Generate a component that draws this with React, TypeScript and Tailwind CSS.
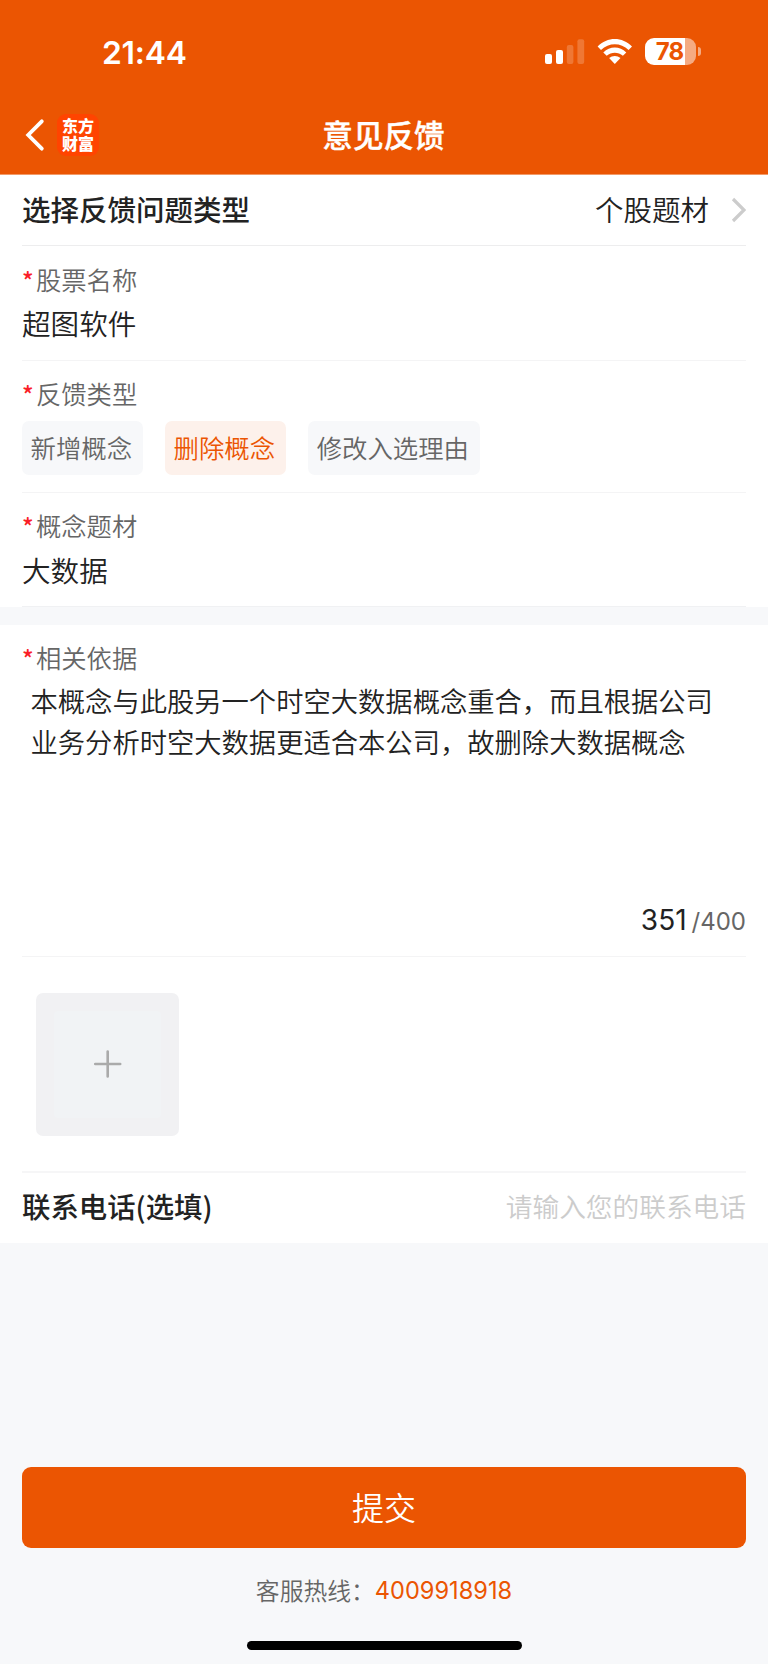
import React from "react";
import clsx from "clsx";

const FEEDBACK_TYPES = ["新增概念", "删除概念", "修改入选理由"];

const StatusBar = () => (
  <div className="flex h-[97px] items-start justify-between pl-[102px] pr-[67px] pt-[38px]">
    <span className="mt-px font-[Inter] text-[31.8px] font-semibold leading-[28px] tracking-[-0.2px]">
      21:44
    </span>
    <div className="flex items-start">
      <svg width="40" height="27" viewBox="0 0 40 27" fill="#fff">
        <rect x="0" y="16" width="7" height="10" rx="2" />
        <rect x="11" y="12" width="7" height="14" rx="2" />
        <rect x="21.8" y="7" width="6.6" height="19" rx="2" opacity="0.2" />
        <rect x="32.4" y="1.3" width="6.8" height="24.7" rx="2" opacity="0.2" />
      </svg>
      <svg className="ml-3" width="36" height="27" viewBox="0 0 36 27" fill="#fff">
        <path d="M0.6 8.6 C10.2 -1.5 25.4 -1.5 35 8.6 L31.6 12 C23.8 4.2 11.8 4.2 4 12 Z" />
        <path d="M6.3 14.4 C12.8 8 22.8 8 29.3 14.4 L25.9 17.8 C21.3 13.6 14.3 13.6 9.7 17.8 Z" />
        <path d="M12.1 20.1 C15.5 17.2 20.1 17.2 23.5 20.1 L17.8 26 Z" />
      </svg>
      <div className="ml-[12px] flex items-center">
        <div className="flex h-[27px] w-[51px] items-center justify-center overflow-hidden rounded-[9px] bg-[linear-gradient(90deg,#fff_0_40px,#f5aa82_40px)] text-[#eb5502]">
          <span className="ml-[-2px] font-[Inter] text-[24px] font-bold leading-[27px] tracking-[-0.8px]">
            78
          </span>
        </div>
        <div className="ml-[2px] h-[9px] w-[3px] rounded-r-full bg-[#f5aa82]" />
      </div>
    </div>
  </div>
);

const NavBar = () => (
  <div className="grid h-[76px] grid-cols-[1fr_auto_1fr] items-center">
    <div className="flex items-center pl-[25px]">
      <svg width="20" height="34" viewBox="0 0 20 34" fill="none">
        <path
          d="M16.8 3.3 L3.2 17 L16.8 30.7"
          stroke="#fff"
          strokeWidth="3.8"
          strokeLinecap="round"
          strokeLinejoin="miter"
        />
      </svg>
      <div className="ml-[12px] flex h-[42px] w-[42px] justify-center rounded-[9px] bg-[#ff4400] pt-[3px]">
        <span className="w-[32px] text-[16px] font-black leading-[17.5px] break-all">东方财富</span>
      </div>
    </div>
    <h1 className="mb-[3px] mr-px text-[30.6px] font-medium leading-[40px] [-webkit-text-stroke:0.4px_#fff]">
      意见反馈
    </h1>
  </div>
);

const Label = ({ children }: { children: React.ReactNode }) => (
  <div className="flex h-[34px] items-center text-[25.3px] text-[#666]">
    <span className="w-[14px] text-[24px] font-medium text-[#fa1e28]">*</span>
    <span>{children}</span>
  </div>
);

const App = () => {
  return (
    <div className="flex h-[1665px] w-[768px] flex-col border-b border-white bg-[#f7f8fa] font-['Noto_Sans_CJK_SC',sans-serif] font-[350] text-[#222]">
      <header className="h-[175px] border-b border-[#f29a68] bg-[#eb5502] text-white">
        <StatusBar />
        <NavBar />
      </header>

      <section className="bg-white px-[22px]">
        <div className="flex h-[71px] items-center border-b border-[#ededee] text-[28.5px] leading-[40px]">
          <span className="mb-[2px] font-medium">选择反馈问题类型</span>
          <span className="mb-[2px] ml-auto">个股题材</span>
          <svg className="ml-[22px]" width="15" height="26" viewBox="0 0 15 26" fill="none">
            <path d="M2 2 L13 13 L2 24" stroke="#ccc" strokeWidth="3.2" />
          </svg>
        </div>

        <div className="h-[115px] border-b border-[#f4f4f5] pt-[17px]">
          <Label>股票名称</Label>
          <p className="mt-[6px] text-[28.6px] leading-[40px]">超图软件</p>
        </div>

        <div className="h-[132px] border-b border-[#f4f4f5] pt-[16px]">
          <Label>反馈类型</Label>
          <div className="mt-[10px] flex gap-[22px]">
            {FEEDBACK_TYPES.map((type) => (
              <button
                key={type}
                className={clsx(
                  "h-[54px] rounded-[7px] pb-[2px] pl-[8.5px] pr-[11px] text-[25.4px] leading-[52px]",
                  type === "删除概念"
                    ? "bg-[#fdf1eb] text-[#eb5502]"
                    : "bg-[#f7f8fa] text-[#666]"
                )}
              >
                {type}
              </button>
            ))}
          </div>
        </div>

        <div className="h-[114px] border-b border-[#f0f1f3] pt-[16px]">
          <Label>概念题材</Label>
          <p className="mt-[7px] text-[28.6px] leading-[40px]">大数据</p>
        </div>
      </section>

      <section className="mt-[18px] bg-white px-[22px]">
        <div className="flex h-[332px] flex-col border-b border-[#f4f4f5] pt-[16px]">
          <Label>相关依据</Label>
          <p className="mt-[5px] pl-[8.5px] text-[27.3px] leading-[41px]">
            本概念与此股另一个时空大数据概念重合，而且根据公司
            <br />
            业务分析时空大数据更适合本公司，故删除大数据概念
          </p>
          <div className="mb-[21.5px] mt-auto flex h-[36px] items-baseline justify-end font-[Inter] font-normal">
            <span className="text-[28px]">351</span>
            <span className="ml-[5px] text-[24px] text-[#666]">/400</span>
          </div>
        </div>

        <div className="flex h-[216px] items-center border-b-2 border-[#f6f6f7] pl-[14px]">
          <div className="flex h-[143px] w-[143px] items-center justify-center rounded-[7px] bg-[#f1f1f3]">
            <div className="flex h-[107px] w-[107px] items-center justify-center rounded-[4px] bg-[#f1f3f5]">
              <svg width="28" height="28" viewBox="0 0 28 28" fill="none">
                <path
                  d="M13.7 1.5 V26.5 M1.2 14 H26.2"
                  stroke="#aaa"
                  strokeWidth="2.6"
                  strokeLinecap="round"
                />
              </svg>
            </div>
          </div>
        </div>

        <div className="flex h-[70px] items-center justify-between pb-[3px]">
          <span className="text-[28.4px] font-medium">联系电话(选填)</span>
          <span className="text-[26.7px] text-[#ccc]">请输入您的联系电话</span>
        </div>
      </section>

      <footer className="mt-auto flex flex-col items-center px-[22px]">
        <button className="h-[81px] w-full rounded-[9px] bg-[#eb5502] pb-[4px] text-[32px] text-white">
          提交
        </button>
        <p className="mt-[26px] flex h-[36px] items-center pb-[5px] text-[23.8px] text-[#666]">
          客服热线：
          <span className="mt-[2px] font-[Inter] text-[23.6px] font-normal text-[#eb5502]">
            4009918918
          </span>
        </p>
        <div className="mb-[14px] mt-[31px] h-[9px] w-[275px] rounded-full bg-black" />
      </footer>
    </div>
  );
};

export default App;
